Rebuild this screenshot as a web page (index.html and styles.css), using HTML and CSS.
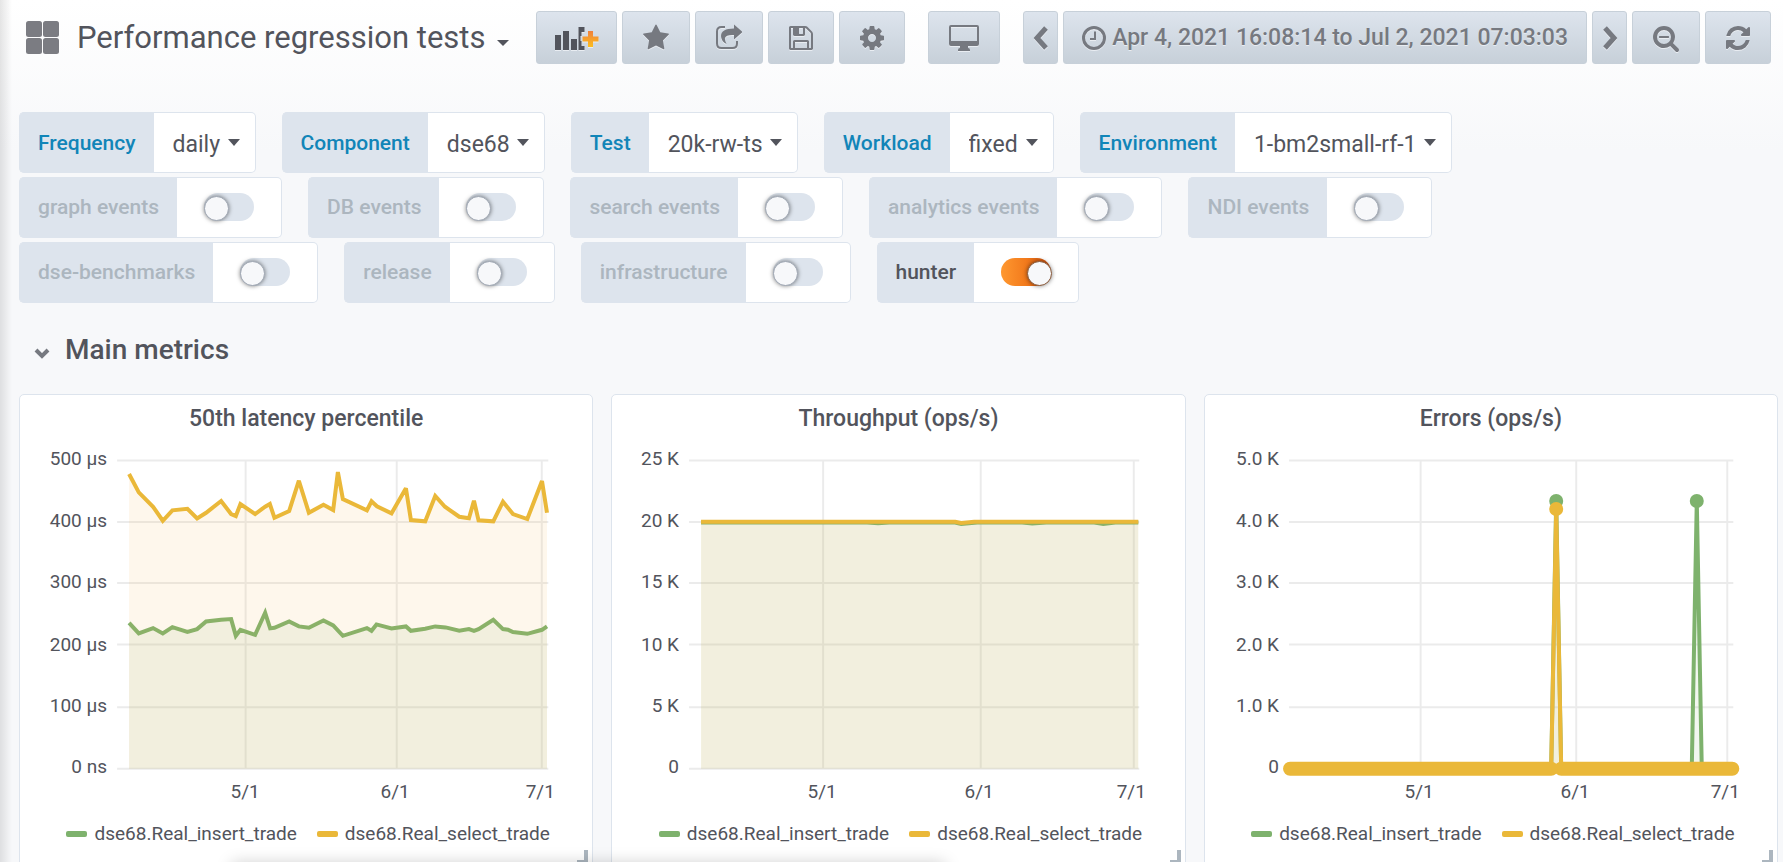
FILE: index.html
```html
<!DOCTYPE html>
<html lang="en">
<head>
<meta charset="utf-8">
<title>Performance regression tests</title>
<link rel="stylesheet" href="styles.css">
</head>
<body>
<div class="dashboard">
  <header class="navbar">
    <button class="title" type="button">
      <svg class="title-grid" viewBox="0 0 33 33" aria-hidden="true"><rect width="16" height="16" rx="2.5"/><rect x="17" width="16" height="16" rx="2.5"/><rect y="17" width="16" height="16" rx="2.5"/><rect x="17" y="17" width="16" height="16" rx="2.5"/></svg>
      <span>Performance regression tests</span>
      <svg class="title-caret" viewBox="0 0 12 6" aria-hidden="true"><path d="M0 0h12L6 6z"/></svg>
    </button>
    <div class="group">
      <button class="btn" type="button" aria-label="Add panel">
        <svg class="add-icon" width="39" height="28" viewBox="2 0 39 28" aria-hidden="true">
          <defs><linearGradient id="plus" x1="0" y1="0" x2="0" y2="1"><stop offset="0" stop-color="#f0803c"/><stop offset="1" stop-color="#fcbe1e"/></linearGradient></defs>
          <path fill="#52545c" d="M0 11h6v15H0zM8 7h6v19H8zM16 15h6v11h-6zM23.500 3h6v5h-3v4h-1v5h1v5h3v4h-6z"/>
          <path fill="url(#plus)" d="M33 7h5v5.500h5.500v5H38V23h-5v-5.500h-5.500v-5H33z"/>
        </svg>
      </button>
      <button class="btn" type="button" aria-label="Star">
        <svg width="26" height="28" viewBox="64 0 1664 1792" aria-hidden="true"><path d="M1728 647q0 22-26 48l-363 354 86 500q1 7 1 20 0 21-10.500 35.500t-30.500 14.500q-19 0-40-12l-449-236-449 236q-22 12-40 12-21 0-31.500-14.500t-10.500-35.500q0-6 2-20l86-500-364-354q-25-27-25-48 0-37 56-46l502-73 225-455q19-41 49-41t49 41l225 455 502 73q56 9 56 46z"/></svg>
      </button>
      <button class="btn" type="button" aria-label="Share">
        <svg width="26" height="28" viewBox="0 0 26 28" aria-hidden="true"><path fill="none" stroke="#767980" stroke-width="2" d="M9 3H5.500Q1 3 1 7.500v12Q1 24 5.500 24h11q4.500 0 4.500-4.500V17"/><path d="M18 .5l8.500 7.500-8.500 7.500V11q-8-.5-9 3-.5 2 1.500 6Q5 17 5 12q0-7.500 13-7.500z"/></svg>
      </button>
      <button class="btn" type="button" aria-label="Save">
        <svg width="24" height="28" viewBox="128 0 1536 1792" aria-hidden="true"><path d="M512 1536h768v-384h-768v384zm896 0h128v-896q0-14-10-38.500t-20-34.500l-281-281q-10-10-34-20t-39-10v416q0 40-28 68t-68 28h-576q-40 0-68-28t-28-68v-416h-128v1280h128v-416q0-40 28-68t68-28h832q40 0 68 28t28 68v416zm-384-928v-320q0-13-9.500-22.500t-22.500-9.500h-192q-13 0-22.500 9.500t-9.500 22.500v320q0 13 9.500 22.500t22.500 9.500h192q13 0 22.500-9.500t9.500-22.500zm640 32v928q0 40-28 68t-68 28h-1344q-40 0-68-28t-28-68v-1344q0-40 28-68t68-28h928q40 0 88 20t76 48l280 280q28 28 48 76t20 88z"/></svg>
      </button>
      <button class="btn" type="button" aria-label="Settings">
        <svg width="24" height="28" viewBox="128 0 1536 1792" aria-hidden="true"><path d="M1152 896q0-106-75-181t-181-75-181 75-75 181 75 181 181 75 181-75 75-181zm512-109v222q0 12-8 23t-20 13l-185 28q-19 54-39 91 35 50 107 138 10 12 10 25t-9 23q-27 37-99 108t-94 71q-12 0-26-9l-138-108q-44 23-91 38-16 136-29 186-7 28-36 28h-222q-14 0-24.500-8.500t-11.500-21.500l-28-184q-49-16-90-37l-141 107q-10 9-25 9-14 0-25-11-126-114-165-168-7-10-7-23 0-12 8-23 15-21 51-66.500t54-70.500q-27-50-41-99l-183-27q-13-2-21-12.500t-8-23.500v-222q0-12 8-23t19-13l186-28q14-46 39-92-40-57-107-138-10-12-10-24 0-10 9-23 26-36 98.500-107.500t94.500-71.500q13 0 26 10l138 107q44-23 91-38 16-136 29-186 7-28 36-28h222q14 0 24.500 8.500t11.500 21.500l28 184q49 16 90 37l142-107q9-9 24-9 13 0 25 10 129 119 165 170 7 8 7 22 0 12-8 23-15 21-51 66.500t-54 70.500q26 50 41 98l183 28q13 2 21 12.500t8 23.500z"/></svg>
      </button>
    </div>
    <button class="btn" type="button" aria-label="Cycle view mode">
      <svg width="30" height="28" viewBox="0 0 30 28" aria-hidden="true"><path fill-rule="evenodd" d="M2 1h26q2 0 2 2v17q0 2-2 2h-9v2q2 0 2 2v1H9v-1q0-2 2-2v-2H2q-2 0-2-2V3q0-2 2-2zm0 2v14h26V3z"/></svg>
    </button>
    <div class="group">
      <button class="btn btn-slim" type="button" aria-label="Earlier"><svg width="16" height="28" viewBox="0 0 16 28" aria-hidden="true"><path class="line" d="M13 4L4 14l9 10"/></svg></button>
      <button class="btn btn-time" type="button">
        <svg width="24" height="28" viewBox="0 0 24 28" aria-hidden="true"><circle class="ring" cx="12" cy="14" r="10.500"/><path class="thin" d="M13 7.500V15H8"/></svg>
        <span>Apr 4, 2021 16:08:14 to Jul 2, 2021 07:03:03</span>
      </button>
      <button class="btn btn-slim" type="button" aria-label="Later"><svg width="16" height="28" viewBox="0 0 16 28" aria-hidden="true"><path class="line" d="M3 4l9 10-9 10"/></svg></button>
      <button class="btn" type="button" aria-label="Zoom out">
        <svg width="26" height="28" viewBox="64 0 1664 1792" aria-hidden="true"><path d="M1088 800v64q0 13-9.500 22.500t-22.500 9.500h-576q-13 0-22.500-9.500t-9.500-22.500v-64q0-13 9.500-22.500t22.500-9.500h576q13 0 22.500 9.500t9.500 22.500zm128 32q0-185-131.500-316.500t-316.500-131.500-316.500 131.500-131.500 316.500 131.500 316.500 316.500 131.500 316.500-131.500 131.500-316.500zm512 832q0 53-37.500 90.500t-90.500 37.500q-54 0-90-38l-343-342q-179 124-399 124-143 0-273.500-55.500t-225-150-150-225-55.500-273.500 55.500-273.500 150-225 225-150 273.500-55.500 273.500 55.500 225 150 150 225 55.500 273.500q0 220-124 399l343 343q37 37 37 90z"/></svg>
      </button>
      <button class="btn" type="button" aria-label="Refresh">
        <svg width="24" height="28" viewBox="128 0 1536 1792" aria-hidden="true"><path d="M1639 1056q0 5-1 7-64 268-268 434.500t-478 166.500q-146 0-282.500-55t-243.500-157l-129 129q-19 19-45 19t-45-19-19-45v-448q0-26 19-45t45-19h448q26 0 45 19t19 45-19 45l-137 137q71 66 161 102t187 36q134 0 250-65t186-179q11-17 53-117 8-23 30-23h192q13 0 22.500 9.500t9.500 22.500zm25-800v448q0 26-19 45t-45 19h-448q-26 0-45-19t-19-45 19-45l138-138q-148-137-349-137-134 0-250 65t-186 179q-11 17-53 117-8 23-30 23h-199q-13 0-22.500-9.500t-9.500-22.500v-7q65-268 270-434.500t480-166.500q146 0 284 55.500t245 156.500l130-129q19-19 45-19t45 19 19 45z"/></svg>
      </button>
    </div>
  </header>

  <main class="content">
    <form class="controls">
      <div class="control-row">
        <div class="control"><label class="control-label link" for="v1">Frequency</label><div class="control-value"><select id="v1"><option>daily</option></select><svg class="caret" viewBox="0 0 12 7" aria-hidden="true"><path d="M0 0h12L6 7z"/></svg></div></div>
        <div class="control"><label class="control-label link" for="v2">Component</label><div class="control-value"><select id="v2"><option>dse68</option></select><svg class="caret" viewBox="0 0 12 7" aria-hidden="true"><path d="M0 0h12L6 7z"/></svg></div></div>
        <div class="control"><label class="control-label link" for="v3">Test</label><div class="control-value"><select id="v3"><option>20k-rw-ts</option></select><svg class="caret" viewBox="0 0 12 7" aria-hidden="true"><path d="M0 0h12L6 7z"/></svg></div></div>
        <div class="control"><label class="control-label link" for="v4">Workload</label><div class="control-value"><select id="v4"><option>fixed</option></select><svg class="caret" viewBox="0 0 12 7" aria-hidden="true"><path d="M0 0h12L6 7z"/></svg></div></div>
        <div class="control"><label class="control-label link" for="v5">Environment</label><div class="control-value"><select id="v5"><option>1-bm2small-rf-1</option></select><svg class="caret" viewBox="0 0 12 7" aria-hidden="true"><path d="M0 0h12L6 7z"/></svg></div></div>
      </div>
      <div class="control-row switches">
        <div class="control"><label class="control-label off" for="a1">graph events</label><div class="control-switch"><input class="switch" type="checkbox" id="a1"></div></div>
        <div class="control"><label class="control-label off" for="a2">DB events</label><div class="control-switch"><input class="switch" type="checkbox" id="a2"></div></div>
        <div class="control"><label class="control-label off" for="a3">search events</label><div class="control-switch"><input class="switch" type="checkbox" id="a3"></div></div>
        <div class="control"><label class="control-label off" for="a4">analytics events</label><div class="control-switch"><input class="switch" type="checkbox" id="a4"></div></div>
        <div class="control"><label class="control-label off" for="a5">NDI events</label><div class="control-switch"><input class="switch" type="checkbox" id="a5"></div></div>
      </div>
      <div class="control-row switches">
        <div class="control"><label class="control-label off" for="a6">dse-benchmarks</label><div class="control-switch"><input class="switch" type="checkbox" id="a6"></div></div>
        <div class="control"><label class="control-label off" for="a7">release</label><div class="control-switch"><input class="switch" type="checkbox" id="a7"></div></div>
        <div class="control"><label class="control-label off" for="a8">infrastructure</label><div class="control-switch"><input class="switch" type="checkbox" id="a8"></div></div>
        <div class="control"><label class="control-label" for="a9">hunter</label><div class="control-switch"><input class="switch" type="checkbox" id="a9" checked></div></div>
      </div>
    </form>

    <h2 class="row-title">
      <svg class="chevron" viewBox="0 0 16 11" aria-hidden="true"><path d="M2 2l6 6 6-6"/></svg>
      <span>Main metrics</span>
    </h2>

    <div class="panels">
      <section class="panel">
        <h3 class="panel-title">50th latency percentile</h3>
        <svg class="chart" viewBox="0 0 572 370" role="img" aria-label="50th latency percentile">
          <path class="grid" d="M97 20.500H528M97 82H528M97 143H528M97 204.500H528M97 267H528M97 328.500H528M225.500 20V328.500M376.500 20V328.500M521.500 20V328.500"/>
          <path class="fill-insert" d="M109 328.500V182.700L118.700 193.300 133 188 142.700 193.300 152.300 187 167.300 191.700 177 189 186 181.300 201 179.700 211 179 215.700 195.700 220.300 189.700 235 194.700 245 172.700 250 188.300 254.300 187.700 269 181.300 278.700 186.300 288.700 187.700 303.300 180.300 313 185.300 322.700 195.700 346.700 188 351.300 190.700 356.300 184.300 371.300 188.300 385.700 186.300 390.700 190.700 405 188.700 415 186.300 425.300 187.300 439 190.700 448.700 189 453.700 190.700 458.300 189 473 179.700 482.700 189 487.700 189.700 492.700 192 507 193.700 521.700 189.700 526.700 186.300V328.500z"/>
          <polyline class="series insert" points="109 182.700 118.700 193.300 133 188 142.700 193.300 152.300 187 167.300 191.700 177 189 186 181.300 201 179.700 211 179 215.700 195.700 220.300 189.700 235 194.700 245 172.700 250 188.300 254.300 187.700 269 181.300 278.700 186.300 288.700 187.700 303.300 180.300 313 185.300 322.700 195.700 346.700 188 351.300 190.700 356.300 184.300 371.300 188.300 385.700 186.300 390.700 190.700 405 188.700 415 186.300 425.300 187.300 439 190.700 448.700 189 453.700 190.700 458.300 189 473 179.700 482.700 189 487.700 189.700 492.700 192 507 193.700 521.700 189.700 526.700 186.300"/>
          <path class="fill-select" d="M109 328.500V34L118.700 52.300 133 66.700 142.700 80.700 152.300 70.300 167.300 68.700 177 78.300 186 72.700 201 61 211 74 215.700 76 220.300 64 235 74 245 66.700 249.700 64 254.300 77.700 269 71 278.700 40.700 288.700 72.700 303.300 64.700 313 70 317.700 32 322.700 59 346.700 70.300 351.300 61.300 356.700 66.300 371.300 73.300 385.700 48.300 390.700 80 405 81.300 415 56 424.700 66.700 439 76.700 448.700 78.300 453.700 60.700 458.300 80.300 473 81.300 482.700 61.700 492.700 74 507 79 521.700 41 526.700 72.700V328.500z"/>
          <polyline class="series select" points="109 34 118.700 52.300 133 66.700 142.700 80.700 152.300 70.300 167.300 68.700 177 78.300 186 72.700 201 61 211 74 215.700 76 220.300 64 235 74 245 66.700 249.700 64 254.300 77.700 269 71 278.700 40.700 288.700 72.700 303.300 64.700 313 70 317.700 32 322.700 59 346.700 70.300 351.300 61.300 356.700 66.300 371.300 73.300 385.700 48.300 390.700 80 405 81.300 415 56 424.700 66.700 439 76.700 448.700 78.300 453.700 60.700 458.300 80.300 473 81.300 482.700 61.700 492.700 74 507 79 521.700 41 526.700 72.700"/>
          <g class="y-axis"><text x="87" y="25">500 µs</text><text x="87" y="87">400 µs</text><text x="87" y="148">300 µs</text><text x="87" y="211">200 µs</text><text x="87" y="272">100 µs</text><text x="87" y="333">0 ns</text></g>
          <g class="x-axis"><text x="225" y="358">5/1</text><text x="375" y="358">6/1</text><text x="520" y="358">7/1</text></g>
        </svg>
        <ul class="legend"><li><i class="swatch insert-bg"></i>dse68.Real_insert_trade</li><li><i class="swatch select-bg"></i>dse68.Real_select_trade</li></ul>
        <span class="resize"></span>
      </section>

      <section class="panel">
        <h3 class="panel-title">Throughput (ops/s)</h3>
        <svg class="chart" viewBox="0 0 572 370" role="img" aria-label="Throughput (ops/s)">
          <path class="grid" d="M77 20.500H527M77 82H527M77 143H527M77 204.500H527M77 267H527M77 328.500H527M211 20V328.500M368.500 20V328.500M521.500 20V328.500"/>
          <path class="fill-insert" d="M89 82H526V328.500H89z"/>
          <polyline class="series insert" points="89 82.500 255 82.500 266 83.300 277 82.500 343 82.500 349 84 365 82.500 410 82.500 420 83.500 434 82.500 482 82.500 491 84 503 82.500 526 82.500"/>
          <path class="fill-select" d="M89 82H526V328.500H89z"/>
          <polyline class="series select" points="89 81.800 343 81.800 349 83 362 81.800 526 81.800"/>
          <g class="y-axis"><text x="67" y="25">25 K</text><text x="67" y="87">20 K</text><text x="67" y="148">15 K</text><text x="67" y="211">10 K</text><text x="67" y="272">5 K</text><text x="67" y="333">0</text></g>
          <g class="x-axis"><text x="210" y="358">5/1</text><text x="367" y="358">6/1</text><text x="519" y="358">7/1</text></g>
        </svg>
        <ul class="legend"><li><i class="swatch insert-bg"></i>dse68.Real_insert_trade</li><li><i class="swatch select-bg"></i>dse68.Real_select_trade</li></ul>
        <span class="resize"></span>
      </section>

      <section class="panel">
        <h3 class="panel-title">Errors (ops/s)</h3>
        <svg class="chart" viewBox="0 0 572 370" role="img" aria-label="Errors (ops/s)">
          <path class="grid" d="M84 20.500H528M84 82H528M84 143H528M84 204.500H528M84 267H528M84 328.500H528M215.500 20V328.500M371 20V328.500M522 20V328.500"/>
          <path class="fill-insert" d="M346 328.500L351 61 356 328.500zM486.500 328.500L491.500 61 496.500 328.500z"/>
          <polyline class="series insert" points="85 328.500 346 328.500 351 61 356 328.500 486.500 328.500 491.500 61 496.500 328.500 527 328.500"/>
          <path class="dots insert-dots" d="M351 61h0M491.500 61h0"/>
          <path class="fill-select" d="M346 328.500L351 69 356 328.500z"/>
          <polyline class="series select" points="85 328.500 346 328.500 351 69 356 328.500 527 328.500"/>
          <path class="dots select-dots" d="M351 69h0M85 328.500H346M356 328.500H527"/>
          <g class="y-axis"><text x="74" y="25">5.0 K</text><text x="74" y="87">4.0 K</text><text x="74" y="148">3.0 K</text><text x="74" y="211">2.0 K</text><text x="74" y="272">1.0 K</text><text x="74" y="333">0</text></g>
          <g class="x-axis"><text x="214" y="358">5/1</text><text x="370" y="358">6/1</text><text x="520" y="358">7/1</text></g>
        </svg>
        <ul class="legend"><li><i class="swatch insert-bg"></i>dse68.Real_insert_trade</li><li><i class="swatch select-bg"></i>dse68.Real_select_trade</li></ul>
        <span class="resize"></span>
      </section>
    </div>
  </main>
</div>
</body>
</html>
```
FILE: styles.css
```css
* { box-sizing: border-box; }

body {
  margin: 0;
  overflow: hidden;
  background: #f7f8fa;
  color: #52545c;
  font-family: Roboto, "Liberation Sans", sans-serif;
  font-size: 21px;
}

button, select, input { margin: 0; font: inherit; color: inherit; }

.dashboard {
  position: relative;
  height: 100vh;
  overflow: hidden;
  background: linear-gradient(#fff, #f7f8fa 150px);
}

/* edge shadow cast by the side menu */
.dashboard::before {
  content: "";
  position: absolute;
  inset: 0 auto 0 0;
  width: 12px;
  background: linear-gradient(90deg, rgba(0, 0, 0, .1), rgba(0, 0, 0, 0));
}

/* shadow of the status bar resting on the lower edge */
.dashboard::after {
  content: "";
  position: absolute;
  left: 13%;
  right: 47%;
  bottom: -12px;
  height: 10px;
  box-shadow: 0 0 16px rgba(0, 0, 0, .25);
}

.navbar {
  display: flex;
  align-items: center;
  gap: 23px;
  padding: 11px 12px 0 26px;
}

.group { display: flex; gap: 5px; }

.title {
  display: flex;
  align-items: center;
  margin-right: auto;
  padding: 0;
  border: 0;
  background: none;
  font-size: 31px;
  white-space: nowrap;
}
.title-grid { width: 33px; height: 33px; margin-right: 18px; fill: #7b7c82; }
.title-caret { width: 12px; height: 6px; margin: 10px 0 0 12px; fill: #52545c; }

.btn {
  display: flex;
  align-items: center;
  justify-content: center;
  height: 53px;
  padding: 0 20px;
  border: 1px solid #c7d0d9;
  border-radius: 3px;
  background: linear-gradient(#dde4ed, #c7d0d9);
  color: #767980;
  font-weight: 500;
  white-space: nowrap;
  text-shadow: 0 1px 0 #e9edf2;
}
.btn svg { flex: none; fill: #767980; filter: drop-shadow(0 1px 0 #e9edf2); }
.btn .add-icon { overflow: visible; }
.btn-slim { width: 35px; padding: 0; }
.btn-time { gap: 6px; padding: 0 18px; font-size: 23px; }
.btn .line { fill: none; stroke: #767980; stroke-width: 5; }
.btn .ring { fill: none; stroke: #767980; stroke-width: 3; }
.btn .thin { fill: none; stroke: #767980; stroke-width: 2; }

.content { padding: 48px 5px 0 19px; }

.controls { display: flex; flex-direction: column; gap: 4px; }
.control-row { display: flex; gap: 26px; }
.control { display: flex; height: 61px; }
.control-label {
  display: flex;
  align-items: center;
  padding: 0 18px;
  border: 1px solid #dde4ed;
  border-right: 0;
  border-radius: 5px 0 0 5px;
  background: #dde4ed;
  font-weight: 500;
  white-space: nowrap;
}
.switches .control-label, .switches .control-switch { padding-bottom: 2px; }
.link { color: #1185b8; }
.off { color: #acb6bf; }
.control-value, .control-switch {
  display: flex;
  align-items: center;
  border: 1px solid #dde4ed;
  border-left: 0;
  border-radius: 0 5px 5px 0;
  background: #fff;
}
.control-value { gap: 7px; padding: 3px 15px 0 19px; }
.control-value select {
  padding: 0;
  border: 0;
  background: none;
  appearance: none;
  font-size: 23px;
}
.caret { width: 12px; height: 7px; margin-bottom: 4px; fill: #52545c; }

.control-switch { padding: 0 27px; }
.switch {
  position: relative;
  width: 50px;
  height: 28px;
  border-radius: 14px;
  background: #dde4ed;
  appearance: none;
}
.switch::before {
  content: "";
  position: absolute;
  top: 3px;
  left: 0;
  width: 23px;
  height: 23px;
  border: 1px solid #9fa7b3;
  border-radius: 50%;
  background: #f7f8fa;
  box-shadow: 0 0 4px rgba(0, 0, 0, .5);
}
.switch:checked { background: linear-gradient(90deg, #ff9830, #f27a1c 50%, #cf500c); }
.switch:checked::before { left: 26px; border-color: #8a5a3a; }

.row-title {
  display: flex;
  align-items: center;
  gap: 15px;
  margin: 30px 0 28px 15px;
  font-size: 28px;
  font-weight: 500;
  line-height: 33px;
}
.chevron { width: 16px; height: 11px; margin-top: 8px; fill: none; stroke: #767980; stroke-width: 4; }

.panels { display: grid; grid-template-columns: repeat(3, 1fr); gap: 18px; }
.panel {
  position: relative;
  padding-bottom: 20px;
  border: 1px solid #dde4ed;
  border-radius: 5px;
  background: #fff;
}
.panel-title {
  margin: 0;
  height: 45px;
  padding-top: 1px;
  font-size: 23px;
  font-weight: 500;
  line-height: 45px;
  text-align: center;
}
.chart { display: block; width: 100%; }
.chart text { fill: #52545c; font-size: 19px; }
.y-axis { text-anchor: end; }
.x-axis { text-anchor: middle; }
.grid { fill: none; stroke: #000; stroke-opacity: .08; stroke-width: 2; }
.series { fill: none; stroke-width: 4; stroke-linejoin: miter; stroke-miterlimit: 3; }
.insert { stroke: #7eb26d; }
.select { stroke: #eab839; }
.fill-insert { fill: #7eb26d; fill-opacity: .1; }
.fill-select { fill: #f5b041; fill-opacity: .1; }
.dots { fill: none; stroke-width: 14; stroke-linecap: round; }
.insert-dots { stroke: #7eb26d; }
.select-dots { stroke: #eab839; }

.legend {
  display: flex;
  justify-content: center;
  gap: 20px;
  margin: 0;
  padding: 10px 0 0 4px;
  font-size: 19px;
  line-height: 28px;
  list-style: none;
}
.legend li { display: flex; align-items: center; gap: 7px; }
.swatch { width: 21px; height: 6px; border-radius: 2px; }
.insert-bg { background: #7eb26d; }
.select-bg { background: #eab839; }

.resize {
  position: absolute;
  right: 4px;
  bottom: 4px;
  width: 11px;
  height: 14px;
  border: solid #acb6bf;
  border-width: 0 4px 4px 0;
}
```
